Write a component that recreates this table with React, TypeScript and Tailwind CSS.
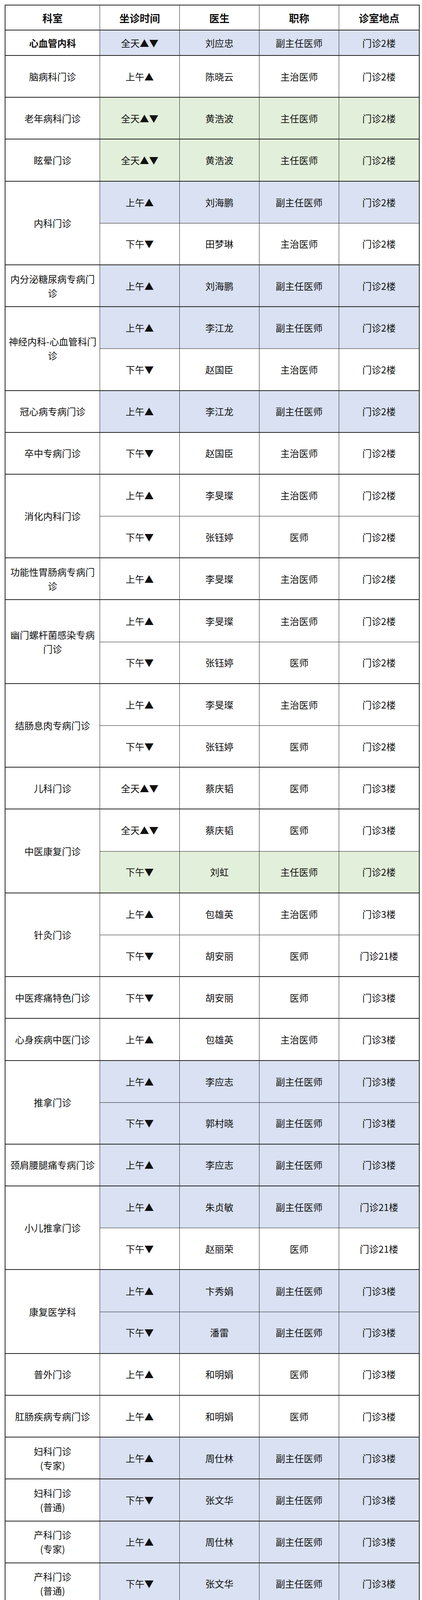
import React from "react";

type Bg = "b" | "g" | "w" | "y";
type Sub = { t: string; d: string; title: string; loc: string; bg: Bg; sun?: boolean };
type Group = { name: string; bold?: boolean; subs: Sub[] };

const BG: Record<Bg, string> = {
  b: "bg-[#d9e1f2]",
  g: "bg-[#e2efda]",
  w: "bg-white",
  y: "bg-[#fff2cc]",
};

const SPAN: Record<number, string> = { 1: "row-span-1", 2: "row-span-2" };

const AM = "上午▲";
const PM = "下午▼";
const ALL = "全天▲▼";

const groups: Group[] = [
  { name: "心血管内科", bold: true, subs: [{ t: ALL, d: "刘应忠", title: "副主任医师", loc: "门诊2楼", bg: "b" }] },
  { name: "脑病科门诊", subs: [{ t: AM, d: "陈晓云", title: "主治医师", loc: "门诊2楼", bg: "w" }] },
  { name: "老年病科门诊", subs: [{ t: ALL, d: "黄浩波", title: "主任医师", loc: "门诊2楼", bg: "g" }] },
  { name: "眩晕门诊", subs: [{ t: ALL, d: "黄浩波", title: "主任医师", loc: "门诊2楼", bg: "g" }] },
  {
    name: "内科门诊",
    subs: [
      { t: AM, d: "刘海鹏", title: "副主任医师", loc: "门诊2楼", bg: "b" },
      { t: PM, d: "田梦琳", title: "主治医师", loc: "门诊2楼", bg: "w" },
    ],
  },
  { name: "内分泌糖尿病专病门诊", subs: [{ t: AM, d: "刘海鹏", title: "副主任医师", loc: "门诊2楼", bg: "b" }] },
  {
    name: "神经内科-心血管科门诊",
    subs: [
      { t: AM, d: "李江龙", title: "副主任医师", loc: "门诊2楼", bg: "b" },
      { t: PM, d: "赵国臣", title: "主治医师", loc: "门诊2楼", bg: "w" },
    ],
  },
  { name: "冠心病专病门诊", subs: [{ t: AM, d: "李江龙", title: "副主任医师", loc: "门诊2楼", bg: "b" }] },
  { name: "卒中专病门诊", subs: [{ t: PM, d: "赵国臣", title: "主治医师", loc: "门诊2楼", bg: "w" }] },
  {
    name: "消化内科门诊",
    subs: [
      { t: AM, d: "李旻璨", title: "主治医师", loc: "门诊2楼", bg: "w" },
      { t: PM, d: "张钰婷", title: "医师", loc: "门诊2楼", bg: "w" },
    ],
  },
  { name: "功能性胃肠病专病门诊", subs: [{ t: AM, d: "李旻璨", title: "主治医师", loc: "门诊2楼", bg: "w" }] },
  {
    name: "幽门螺杆菌感染专病门诊",
    subs: [
      { t: AM, d: "李旻璨", title: "主治医师", loc: "门诊2楼", bg: "w" },
      { t: PM, d: "张钰婷", title: "医师", loc: "门诊2楼", bg: "w" },
    ],
  },
  {
    name: "结肠息肉专病门诊",
    subs: [
      { t: AM, d: "李旻璨", title: "主治医师", loc: "门诊2楼", bg: "w" },
      { t: PM, d: "张钰婷", title: "医师", loc: "门诊2楼", bg: "w" },
    ],
  },
  { name: "儿科门诊", subs: [{ t: ALL, d: "蔡庆韬", title: "医师", loc: "门诊3楼", bg: "w" }] },
  {
    name: "中医康复门诊",
    subs: [
      { t: ALL, d: "蔡庆韬", title: "医师", loc: "门诊3楼", bg: "w" },
      { t: PM, d: "刘虹", title: "主任医师", loc: "门诊2楼", bg: "g" },
    ],
  },
  {
    name: "针灸门诊",
    subs: [
      { t: AM, d: "包雄英", title: "主治医师", loc: "门诊3楼", bg: "w" },
      { t: PM, d: "胡安丽", title: "医师", loc: "门诊21楼", bg: "w" },
    ],
  },
  { name: "中医疼痛特色门诊", subs: [{ t: PM, d: "胡安丽", title: "医师", loc: "门诊3楼", bg: "w" }] },
  { name: "心身疾病中医门诊", subs: [{ t: AM, d: "包雄英", title: "主治医师", loc: "门诊3楼", bg: "w" }] },
  {
    name: "推拿门诊",
    subs: [
      { t: AM, d: "李应志", title: "副主任医师", loc: "门诊3楼", bg: "b" },
      { t: PM, d: "郭村晓", title: "副主任医师", loc: "门诊3楼", bg: "b" },
    ],
  },
  { name: "颈肩腰腿痛专病门诊", subs: [{ t: AM, d: "李应志", title: "副主任医师", loc: "门诊3楼", bg: "b" }] },
  {
    name: "小儿推拿门诊",
    subs: [
      { t: AM, d: "朱贞敏", title: "副主任医师", loc: "门诊21楼", bg: "b" },
      { t: PM, d: "赵丽荣", title: "医师", loc: "门诊21楼", bg: "w" },
    ],
  },
  {
    name: "康复医学科",
    subs: [
      { t: AM, d: "卞秀娟", title: "副主任医师", loc: "门诊3楼", bg: "b" },
      { t: PM, d: "潘雷", title: "副主任医师", loc: "门诊3楼", bg: "b" },
    ],
  },
  { name: "普外门诊", subs: [{ t: AM, d: "和明娟", title: "医师", loc: "门诊3楼", bg: "w" }] },
  { name: "肛肠疾病专病门诊", subs: [{ t: AM, d: "和明娟", title: "医师", loc: "门诊3楼", bg: "w" }] },
  { name: "妇科门诊\n(专家)", subs: [{ t: AM, d: "周仕林", title: "副主任医师", loc: "门诊3楼", bg: "b" }] },
  { name: "妇科门诊\n(普通)", subs: [{ t: PM, d: "张文华", title: "副主任医师", loc: "门诊3楼", bg: "b" }] },
  { name: "产科门诊\n(专家)", subs: [{ t: AM, d: "周仕林", title: "副主任医师", loc: "门诊3楼", bg: "b" }] },
  { name: "产科门诊\n(普通)", subs: [{ t: PM, d: "张文华", title: "副主任医师", loc: "门诊3楼", bg: "b" }] },
  { name: "中医妇科门诊", subs: [{ t: PM, d: "张文华", title: "副主任医师", loc: "门诊3楼", bg: "b" }] },
  { name: "产后康复专病门诊", subs: [{ t: AM, d: "周仕林", title: "副主任医师", loc: "门诊3楼", bg: "b" }] },
  { name: "更年期门诊", subs: [{ t: AM, d: "周仕林", title: "副主任医师", loc: "门诊3楼", bg: "b" }] },
  { name: "耳鼻喉科", subs: [{ t: ALL, d: "李璐璐", title: "主治医师", loc: "门诊3楼", bg: "w" }] },
  { name: "眼科", subs: [{ t: ALL, d: "杨静晖", title: "医师", loc: "门诊3楼", bg: "w" }] },
  {
    name: "皮肤科",
    subs: [
      { t: "上午▲午间", sun: true, d: "杨榆婷", title: "主治医师", loc: "门诊3楼", bg: "w" },
      { t: ALL, d: "凡福青", title: "医师", loc: "门诊3楼", bg: "w" },
    ],
  },
  {
    name: "口腔科门诊",
    subs: [
      { t: AM, d: "罗启德", title: "主任医师", loc: "门诊4楼", bg: "g" },
      { t: ALL, d: "魏欣", title: "医师", loc: "门诊4楼", bg: "w" },
    ],
  },
  {
    name: "骨伤科·疼痛科",
    subs: [
      { t: AM, d: "罗国友", title: "副主任医师", loc: "门诊3楼", bg: "b" },
      { t: PM, d: "高鹏", title: "主治医师", loc: "门诊3楼", bg: "w" },
    ],
  },
  { name: "体重管理门诊", subs: [{ t: PM, d: "李北辰", title: "主治医师", loc: "门诊5楼", bg: "w" }] },
  { name: "药物咨询门诊", subs: [{ t: PM, d: "杨雄", title: "副主任药师", loc: "门诊2楼", bg: "b" }] },
  {
    name: "特需门诊",
    subs: [
      { t: AM, d: "林亚明\n(中医科)", title: "主任医师", loc: "19楼VIP诊室", bg: "y" },
      { t: PM, d: "夏惠明\n(推拿科)", title: "主任医师", loc: "19楼VIP诊室", bg: "y" },
    ],
  },
];

const sunPts = Array.from({ length: 28 }, (_, i) => {
  const a = (Math.PI * i) / 14 - Math.PI / 2;
  const r = i % 2 === 0 ? 11.6 : 8.4;
  return `${(12 + r * Math.cos(a)).toFixed(2)},${(12 + r * Math.sin(a)).toFixed(2)}`;
}).join(" ");

function Sun() {
  return (
    <svg viewBox="0 0 24 24" width="25" height="25" className="inline-block align-[-4px]">
      <polygon points={sunPts} fill="#ffcf1f" stroke="#c98a00" strokeWidth="0.8" strokeLinejoin="round" />
      <circle cx="12" cy="12" r="7" fill="#ffc400" stroke="#d99a00" strokeWidth="0.6" />
      <ellipse cx="9.6" cy="10.6" rx="1" ry="1.3" fill="#6b3a00" />
      <ellipse cx="14.4" cy="10.6" rx="1" ry="1.3" fill="#6b3a00" />
      <path d="M8.6 13.6 Q12 17.2 15.4 13.6" fill="none" stroke="#6b3a00" strokeWidth="1.1" strokeLinecap="round" />
    </svg>
  );
}

function DeptName({ name }: { name: string }) {
  if (!name.includes("·")) return <>{name}</>;
  const [a, b] = name.split("·");
  return (
    <span>
      {a}
      <span className="font-['Liberation_Sans',sans-serif]">·</span>
      {b}
    </span>
  );
}

const cell =
  "flex items-center justify-center text-center px-[4px] text-[24px] leading-[36px] text-[#111] border-[#222] whitespace-pre-line";

export default function App() {
  return (
    <div className="w-[1080px] bg-white pt-[12px] pl-[12px] font-['Noto_Sans_CJK_SC','Noto_Sans',sans-serif]">
      <div className="grid w-[1062px] grid-cols-[242px_204px_204px_204px_204px] grid-rows-[64px_65px_repeat(52,107.19px)] border-2 border-[#222]">
        {["科室", "坐诊时间", "医生", "职称", "诊室地点"].map((h, i) => (
          <div
            key={h}
            className={`flex items-center justify-center text-[26px] font-bold text-[#111] border-b-2 border-[#222] ${
              i < 4 ? "border-r" : ""
            }`}
          >
            {h}
          </div>
        ))}
        {groups.map((g, gi) => {
          const lastGroup = gi === groups.length - 1;
          const groupBottom = lastGroup ? "border-b-0" : "border-b-2";
          return (
            <React.Fragment key={gi}>
              <div
                className={`${cell} ${SPAN[g.subs.length]} border-r ${groupBottom} ${
                  g.bold ? "font-bold" : ""
                } bg-white`}
              >
                <DeptName name={g.name} />
              </div>
              {g.subs.map((s, si) => {
                const isLast = si === g.subs.length - 1;
                const bottom = isLast ? groupBottom : "border-b";
                const bg = BG[s.bg];
                return (
                  <React.Fragment key={si}>
                    <div className={`${cell} ${bg} ${bottom} border-r`}>
                      <span>
                        {s.t}
                        {s.sun ? <Sun /> : null}
                      </span>
                    </div>
                    <div className={`${cell} ${bg} ${bottom} border-r`}>{s.d}</div>
                    <div className={`${cell} ${bg} ${bottom} border-r`}>{s.title}</div>
                    <div className={`${cell} ${bg} ${bottom}`}>{s.loc}</div>
                  </React.Fragment>
                );
              })}
            </React.Fragment>
          );
        })}
      </div>
    </div>
  );
}
